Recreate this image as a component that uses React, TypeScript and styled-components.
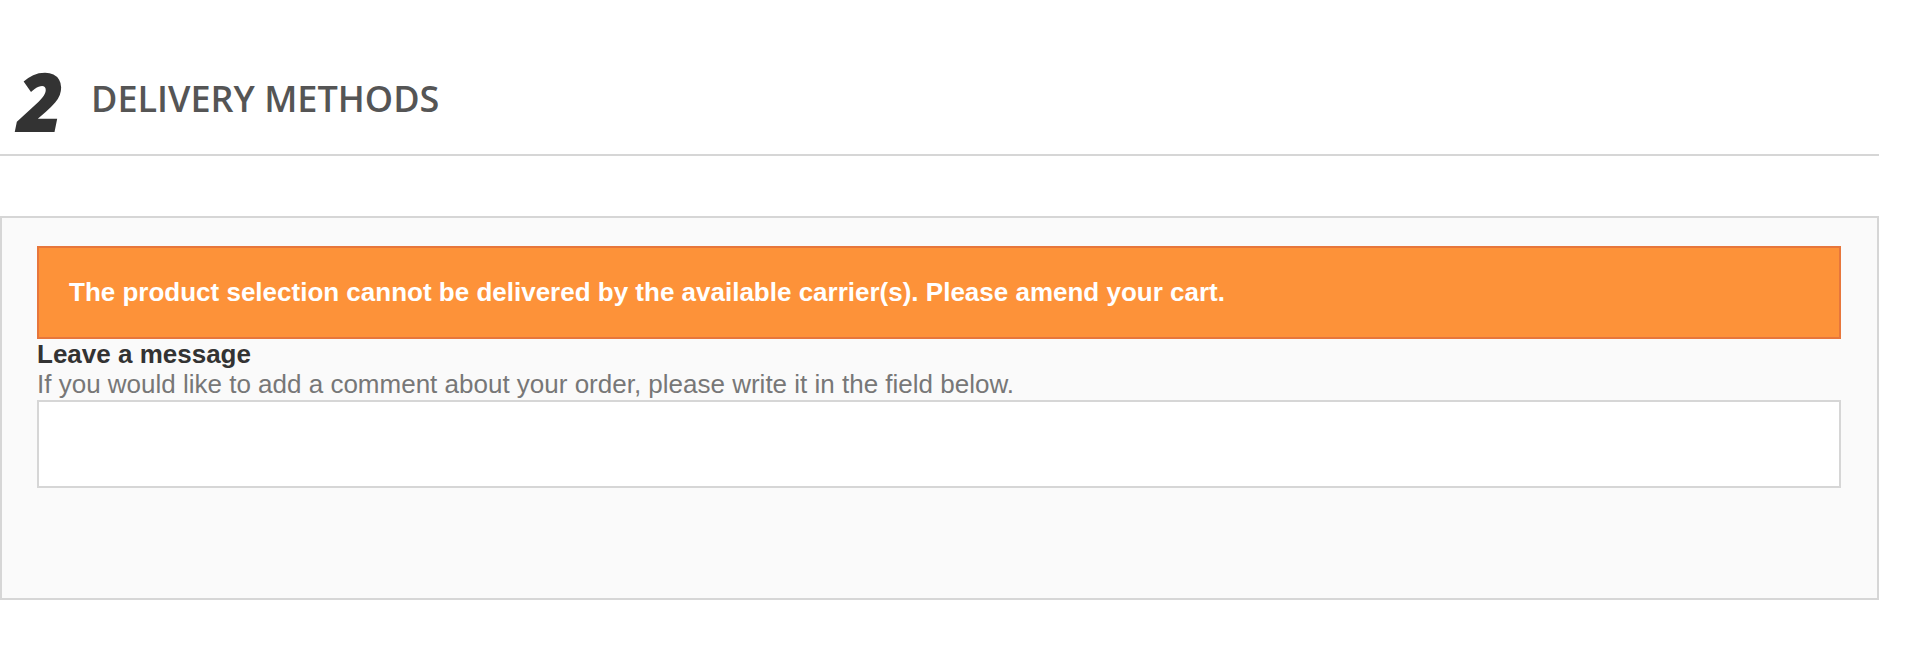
import React from 'react';
import styled, { createGlobalStyle } from 'styled-components';

const GlobalStyle = createGlobalStyle`
  body {
    margin: 0;
    background: #fff;
    font-family: 'Liberation Sans', Arial, sans-serif;
  }
`;

const Page = styled.div`
  width: 1879px;
  padding-top: 60px;
`;

const StepHeader = styled.header`
  display: flex;
  align-items: center;
  padding: 0 0 13px 17px;
  border-bottom: 2px solid #d6d6d6;
`;

const StepNumber = styled.span`
  font-family: 'Open Sans', sans-serif;
  font-style: italic;
  font-weight: 800;
  font-size: 81px;
  line-height: 1;
  color: #333;
  width: 74px;
`;

const StepTitle = styled.h1`
  margin: 0 0 4px;
  font-family: 'Open Sans', sans-serif;
  font-weight: 600;
  font-size: 36px;
  text-transform: uppercase;
  color: #555;
`;

const Panel = styled.section`
  margin-top: 60px;
  background: #fafafa;
  border: 2px solid #d6d6d6;
  padding: 28px 36px 110px 35px;
`;

const Alert = styled.div`
  background: #fd9239;
  border: 2px solid #e7763b;
  padding: 0 30px;
  height: 93px;
  box-sizing: border-box;
  display: flex;
  align-items: center;
  color: #fff;
  font-weight: 700;
  font-size: 26px;
`;

const FieldLabel = styled.label`
  display: block;
  font-weight: 700;
  font-size: 26px;
  line-height: 30px;
  color: #333;
`;

const FieldHint = styled.p`
  margin: 0 0 1px;
  font-size: 26px;
  line-height: 30px;
  color: #777;
`;

const MessageBox = styled.textarea`
  display: block;
  width: 100%;
  height: 88px;
  box-sizing: border-box;
  margin: 0;
  border: 2px solid #d6d6d6;
  background: #fff;
  resize: none;
  outline: none;
`;

export default function App() {
  return (
    <>
      <GlobalStyle />
      <Page>
        <StepHeader>
          <StepNumber>2</StepNumber>
          <StepTitle>Delivery methods</StepTitle>
        </StepHeader>
        <Panel>
          <Alert>
            The product selection cannot be delivered by the available carrier(s). Please amend your cart.
          </Alert>
          <FieldLabel htmlFor="message">Leave a message</FieldLabel>
          <FieldHint>If you would like to add a comment about your order, please write it in the field below.</FieldHint>
          <MessageBox id="message" />
        </Panel>
      </Page>
    </>
  );
}
